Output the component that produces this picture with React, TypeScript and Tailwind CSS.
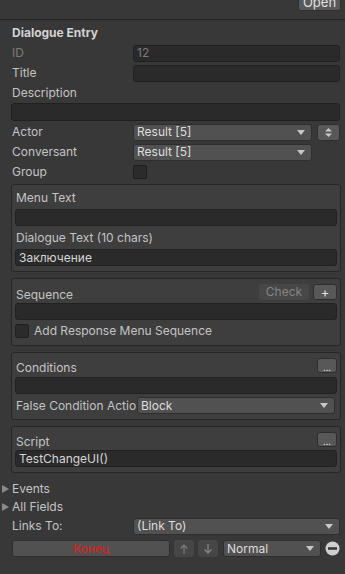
import React from "react";

const field = "h-[17px] rounded-[3px] border border-[#212121] bg-[#2a2a2a] flex items-center px-[3px]";
const drop =
  "h-[17px] rounded-[3px] border border-[#2e2e2e] bg-[#515151] flex items-center pl-[3px] pr-[6px] text-[#dedede]";
const box = "ml-[11px] mr-[4px] rounded-[3px] border border-[#262626] bg-[#3e3e3e] px-[3px]";
const btn = "rounded-[3px] border border-[#2e2e2e] bg-[#585858] flex items-center justify-center text-[#e0e0e0]";

function Arrow() {
  return (
    <svg width="8" height="5" viewBox="0 0 8 5" className="ml-auto shrink-0">
      <path d="M0 0 H8 L4 5 Z" fill="#c8c8c8" />
    </svg>
  );
}

function Dropdown({ label, className }: { label: string; className: string }) {
  return (
    <div className={`${drop} ${className}`}>
      <span className="truncate">{label}</span>
      <Arrow />
    </div>
  );
}

function Row({ label, children, dim }: { label: string; children?: React.ReactNode; dim?: boolean }) {
  return (
    <div className="ml-[12px] mr-[5px] flex h-[20px] items-center">
      <span className={`w-[121px] shrink-0 ${dim ? "text-[#7b7b7b]" : ""}`}>{label}</span>
      {children}
    </div>
  );
}

function Check() {
  return <div className="h-[14px] w-[14px] rounded-[2px] border border-[#1f1f1f] bg-[#2b2b2b]" />;
}

function Dots() {
  return (
    <div className={`${btn} h-[15px] w-[20px] text-[9px] leading-none pt-[3px]`}>...</div>
  );
}

function Foldout({ label }: { label: string }) {
  return (
    <div className="flex h-[18px] items-center">
      <svg width="7" height="8" viewBox="0 0 7 8" className="ml-[2px] mr-[3px]">
        <path d="M0 0 L7 4 L0 8 Z" fill="#8a8a8a" />
      </svg>
      <span>{label}</span>
    </div>
  );
}

export default function App() {
  return (
    <div
      className="h-[574px] w-[345px] overflow-hidden bg-[#383838] text-[12px] leading-[14px] text-[#c4c4c4]"
      style={{ fontFamily: "Inter, 'Noto Sans', sans-serif" }}
    >
      <div className="flex h-[20px] justify-end border-b border-[#232323] pr-[4px]">
        <div className={`${btn} -mt-[7px] h-[18px] w-[43px] text-[13px]`}>Open</div>
      </div>

      <div className="ml-[12px] mt-[3px] flex h-[20px] items-center font-bold text-[#d2d2d2]">Dialogue Entry</div>
      <Row label="ID" dim>
        <div className={`${field} flex-1 text-[#7b7b7b]`}>12</div>
      </Row>
      <Row label="Title">
        <div className={`${field} flex-1`} />
      </Row>
      <Row label="Description" />
      <div className={`${field} ml-[11px] mr-[5px] h-[18px]`} />
      <div className="h-[1px]" />
      <Row label="Actor">
        <Dropdown label="Result [5]" className="w-[179px]" />
        <div className={`${btn} ml-[5px] h-[17px] w-[23px] flex-col gap-[2px]`}>
          <svg width="7" height="9" viewBox="0 0 7 9">
            <path d="M0 3.5 L3.5 0 L7 3.5 Z M0 5.5 L7 5.5 L3.5 9 Z" fill="#c8c8c8" />
          </svg>
        </div>
      </Row>
      <Row label="Conversant">
        <Dropdown label="Result [5]" className="w-[179px]" />
      </Row>
      <Row label="Group">
        <Check />
      </Row>

      <div className={`${box} mt-[2px] pb-[5px] pt-[4px]`}>
        <div className="flex h-[18px] items-center pl-[1px]">Menu Text</div>
        <div className={`${field} mt-[2px]`} />
        <div className="mt-[3px] flex h-[18px] items-center pl-[1px]">Dialogue Text (10 chars)</div>
        <div className={`${field} mt-[2px] text-[#d6d6d6]`}>Заключение</div>
      </div>

      <div className={`${box} mt-[6px] pb-[6px] pt-[5px]`}>
        <div className="flex h-[18px] items-start">
          <span className="mt-[4px] pl-[1px]">Sequence</span>
          <div className="ml-auto flex gap-[4px]">
            <div className="flex h-[16px] w-[50px] items-center justify-center rounded-[3px] bg-[#474747] text-[#858585]">
              Check
            </div>
            <div className={`${btn} h-[16px] w-[24px] text-[13px]`}>+</div>
          </div>
        </div>
        <div className={`${field} mt-[1px]`} />
        <div className="mt-[3px] flex h-[16px] items-center gap-[5px]">
          <Check />
          <span>Add Response Menu Sequence</span>
        </div>
      </div>

      <div className={`${box} mt-[6px] pb-[5px] pt-[5px]`}>
        <div className="flex h-[18px] items-start">
          <span className="mt-[3px] pl-[1px]">Conditions</span>
          <div className="ml-auto">
            <Dots />
          </div>
        </div>
        <div className={`${field} mt-[1px]`} />
        <div className="mt-[3px] flex h-[17px] items-center">
          <span className="w-[122px] shrink-0 whitespace-nowrap pl-[1px]">False Condition Actio</span>
          <Dropdown label="Block" className="mr-[2px] flex-1" />
        </div>
      </div>

      <div className={`${box} mt-[6px] pb-[5px] pt-[5px]`}>
        <div className="flex h-[18px] items-start">
          <span className="mt-[3px] pl-[1px]">Script</span>
          <div className="ml-auto">
            <Dots />
          </div>
        </div>
        <div className={`${field} text-[#d6d6d6]`}>TestChangeUI()</div>
      </div>

      <div className="mt-[7px]">
        <Foldout label="Events" />
        <Foldout label="All Fields" />
      </div>
      <div className="ml-[12px] mr-[5px] mt-[1px] flex h-[18px] items-center">
        <span className="w-[121px] shrink-0">Links To:</span>
        <Dropdown label="(Link To)" className="flex-1" />
      </div>
      <div className="ml-[12px] mr-[5px] mt-[5px] flex h-[17px] items-center">
        <div className="flex h-[17px] w-[158px] items-center justify-center rounded-[3px] border border-[#2e2e2e] bg-[#515151] text-[#e31b1b]">
          Конец
        </div>
        <div className="ml-[4px] flex h-[17px] w-[20px] items-center justify-center rounded-[3px] bg-[#464646]">
          <svg width="8" height="10" viewBox="0 0 8 10">
            <path d="M4 10 V1 M0.5 4.5 L4 1 L7.5 4.5" stroke="#7d7d7d" strokeWidth="1.2" fill="none" />
          </svg>
        </div>
        <div className="ml-[4px] flex h-[17px] w-[20px] items-center justify-center rounded-[3px] bg-[#464646]">
          <svg width="8" height="10" viewBox="0 0 8 10">
            <path d="M4 0 V9 M0.5 5.5 L4 9 L7.5 5.5" stroke="#8a8a8a" strokeWidth="1.2" fill="none" />
          </svg>
        </div>
        <Dropdown label="Normal" className="ml-[5px] w-[98px]" />
        <svg width="15" height="15" viewBox="0 0 15 15" className="ml-[4px]">
          <circle cx="7.5" cy="7.5" r="7" fill="#cfcfcf" />
          <rect x="3" y="6.2" width="9" height="2.6" fill="#383838" />
        </svg>
      </div>
    </div>
  );
}
